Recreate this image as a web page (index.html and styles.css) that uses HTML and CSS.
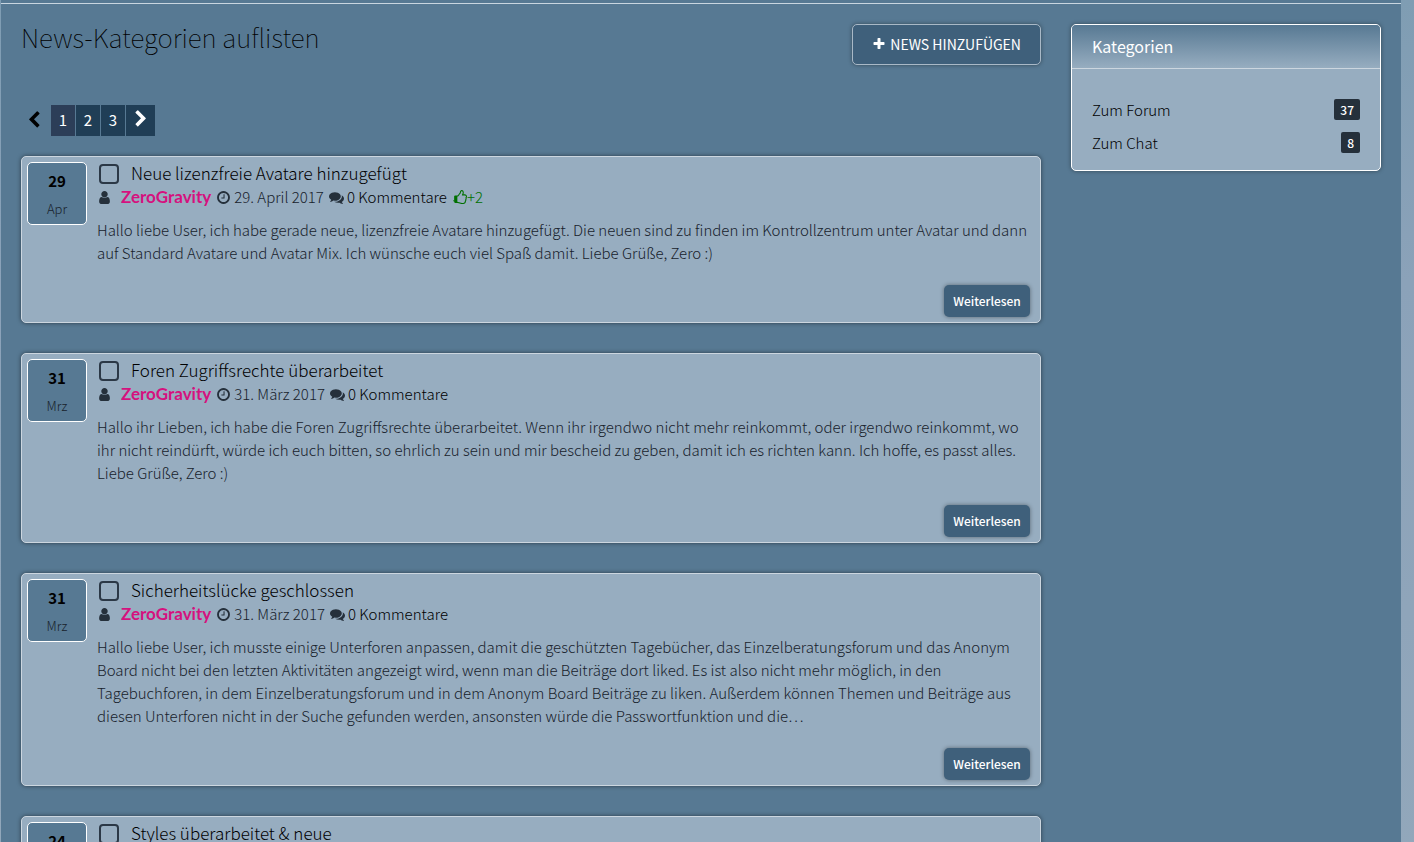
FILE: index.html
```html
<!DOCTYPE html>
<html lang="de">
<head>
  <meta charset="UTF-8">
  <meta name="viewport" content="width=device-width, initial-scale=1">
  <title>News-Kategorien auflisten</title>
  <link rel="stylesheet" href="styles.css">
</head>
<body>

  <!-- icons -->
  <svg class="sprite" aria-hidden="true">
    <symbol id="plus" viewBox="0 0 1792 1792"><path d="M1600 736v192q0 40-28 68t-68 28h-416v416q0 40-28 68t-68 28h-192q-40 0-68-28t-28-68v-416h-416q-40 0-68-28t-28-68v-192q0-40 28-68t68-28h416v-416q0-40 28-68t68-28h192q40 0 68 28t28 68v416h416q40 0 68 28t28 68z"/></symbol>
    <symbol id="user" viewBox="0 0 1792 1792"><path d="M1536 1399q0 109-62.5 187t-150.5 78h-854q-88 0-150.5-78t-62.5-187q0-85 8.5-160.5t31.5-152 58.5-131 94-89 134.5-34.5q131 128 313 128t313-128q76 0 134.5 34.5t94 89 58.5 131 31.5 152 8.5 160.5zm-256-887q0 159-112.5 271.5t-271.5 112.5-271.5-112.5-112.5-271.5 112.5-271.5 271.5-112.5 271.5 112.5 112.5 271.5z"/></symbol>
    <symbol id="clock" viewBox="0 0 1792 1792"><path d="M1024 544v448q0 14-9 23t-23 9h-320q-14 0-23-9t-9-23v-64q0-14 9-23t23-9h224v-352q0-14 9-23t23-9h64q14 0 23 9t9 23zm416 352q0-148-73-273t-198-198-273-73-273 73-198 198-73 273 73 273 198 198 273 73 273-73 198-198 73-273zm224 0q0 209-103 385.5t-279.5 279.5-385.5 103-385.5-103-279.5-279.5-103-385.5 103-385.5 279.5-279.5 385.5-103 385.5 103 279.5 279.5 103 385.5z"/></symbol>
    <symbol id="comments" viewBox="0 0 1792 1792"><path d="M1408 768q0 139-94 257t-256.5 186.5-353.5 68.5q-86 0-176-16-124 88-278 128-36 9-86 16h-3q-11 0-20.5-8t-11.5-21q-1-3-1-6.5t.5-6.5 2-6l2.5-5 3.5-5.5 4-5 4.5-5 4-4.5q5-6 23-25t26-29.5 22.5-29 25-38.5 20.5-44q-124-72-195-177t-71-224q0-139 94-257t256.5-186.5 353.5-68.5 353.5 68.5 256.5 186.5 94 257zm384 256q0 120-71 224.5t-195 176.5q10 24 20.5 44t25 38.5 22.5 29 26 29.5 23 25q1 1 4 4.5t4.5 5 4 5 3.5 5.5l2.5 5 2 6 .5 6.5-1 6.5q-3 14-13 22t-22 7q-50-7-86-16-154-40-278-128-90 16-176 16-271 0-472-132 58 4 88 4 161 0 309-45t264-129q125-92 192-212t67-254q0-77-23-152 129 71 204 178t75 230z"/></symbol>
    <symbol id="thumb" viewBox="0 0 1792 1792"><path d="M256 1408q0-26-19-45t-45-19-45 19-19 45 19 45 45 19 45-19 19-45zm1408-512q0-51-39-89.5t-89-38.5h-352q0-58 48-159.5t48-160.5q0-98-32-145t-128-47q-26 26-38 85t-30.5 125.5-59.5 109.5q-22 23-77 91-4 5-23 30t-31.5 41-34.5 42.5-40 44-38.5 35.5-40 27-35.5 9h-32v640h32q13 0 31.5 3t33 6.5 38 11 35 11.5 35.5 12.5 29 10.5q211 73 342 73h121q192 0 192-167 0-26-5-56 30-16 47.5-52.5t17.5-73.5-18-69q53-50 53-119 0-25-10-55.5t-25-47.5q32-1 53.5-47t21.5-81zm128-1q0 89-49 163 9 33 9 69 0 77-38 144 3 21 3 43 0 101-60 178 1 139-85 219.5t-227 80.5h-129q-96 0-189.5-22.5t-216.5-65.5q-116-40-138-40h-288q-53 0-90.5-37.5t-37.5-90.5v-640q0-53 37.5-90.5t90.5-37.5h274q36-24 137-155 58-75 107-128 24-25 35.5-85.5t30.5-126.5 62-108q39-37 90-37 84 0 151 32.5t102 101.5 35 186q0 93-48 192h176q104 0 180 76t76 179z"/></symbol>
    <symbol id="prev" viewBox="0 0 1792 1792"><path d="M1427 301l-531 531 531 531q19 19 19 45t-19 45l-166 166q-19 19-45 19t-45-19l-742-742q-19-19-19-45t19-45l742-742q19-19 45-19t45 19l166 166q19 19 19 45t-19 45z"/></symbol>
    <symbol id="next" viewBox="0 0 1792 1792"><path d="M1363 877l-742 742q-19 19-45 19t-45-19l-166-166q-19-19-19-45t19-45l531-531-531-531q-19-19-19-45t19-45l166-166q19-19 45-19t45 19l742 742q19 19 19 45t-19 45z"/></symbol>
  </svg>

  <div class="page">
    <main class="content">
      <header class="content-head">
        <h1>News-Kategorien auflisten</h1>
        <button class="btn-add" type="button"><svg class="icon"><use href="#plus"/></svg>NEWS HINZUFÜGEN</button>
      </header>

      <nav class="pages" aria-label="Seiten">
        <span class="prev"><svg class="icon"><use href="#prev"/></svg></span>
        <a class="active" href="#">1</a>
        <a href="#">2</a>
        <a href="#">3</a>
        <a class="next" href="#" aria-label="Weiter"><svg class="icon"><use href="#next"/></svg></a>
      </nav>

      <article class="news">
        <div class="date"><b>29</b><span>Apr</span></div>
        <div class="news-body">
          <div class="title"><input type="checkbox" id="n1"><label for="n1">Neue lizenzfreie Avatare hinzugefügt</label></div>
          <div class="meta">
            <svg class="icon user"><use href="#user"/></svg><a class="author" href="#">ZeroGravity</a>
            <svg class="icon"><use href="#clock"/></svg><span class="time">29. April 2017</span>
            <svg class="icon"><use href="#comments"/></svg><a class="comments" href="#">0 Kommentare</a>
            <span class="likes"><svg class="icon"><use href="#thumb"/></svg>+2</span>
          </div>
          <p>Hallo liebe User, ich habe gerade neue, lizenzfreie Avatare hinzugefügt. Die neuen sind zu finden im Kontrollzentrum unter Avatar und dann auf Standard Avatare und Avatar Mix. Ich wünsche euch viel Spaß damit. Liebe Grüße, Zero :)</p>
          <button class="btn-more" type="button">Weiterlesen</button>
        </div>
      </article>

      <article class="news">
        <div class="date"><b>31</b><span>Mrz</span></div>
        <div class="news-body">
          <div class="title"><input type="checkbox" id="n2"><label for="n2">Foren Zugriffsrechte überarbeitet</label></div>
          <div class="meta">
            <svg class="icon user"><use href="#user"/></svg><a class="author" href="#">ZeroGravity</a>
            <svg class="icon"><use href="#clock"/></svg><span class="time">31. März 2017</span>
            <svg class="icon"><use href="#comments"/></svg><a class="comments" href="#">0 Kommentare</a>
          </div>
          <p>Hallo ihr Lieben, ich habe die Foren Zugriffsrechte überarbeitet. Wenn ihr irgendwo nicht mehr reinkommt, oder irgendwo reinkommt, wo ihr nicht reindürft, würde ich euch bitten, so ehrlich zu sein und mir bescheid zu geben, damit ich es richten kann. Ich hoffe, es passt alles. Liebe Grüße, Zero :)</p>
          <button class="btn-more" type="button">Weiterlesen</button>
        </div>
      </article>

      <article class="news">
        <div class="date"><b>31</b><span>Mrz</span></div>
        <div class="news-body">
          <div class="title"><input type="checkbox" id="n3"><label for="n3">Sicherheitslücke geschlossen</label></div>
          <div class="meta">
            <svg class="icon user"><use href="#user"/></svg><a class="author" href="#">ZeroGravity</a>
            <svg class="icon"><use href="#clock"/></svg><span class="time">31. März 2017</span>
            <svg class="icon"><use href="#comments"/></svg><a class="comments" href="#">0 Kommentare</a>
          </div>
          <p>Hallo liebe User, ich musste einige Unterforen anpassen, damit die geschützten Tagebücher, das Einzelberatungsforum und das Anonym Board nicht bei den letzten Aktivitäten angezeigt wird, wenn man die Beiträge dort liked. Es ist also nicht mehr möglich, in den Tagebuchforen, in dem Einzelberatungsforum und in dem Anonym Board Beiträge zu liken. Außerdem können Themen und Beiträge aus diesen Unterforen nicht in der Suche gefunden werden, ansonsten würde die Passwortfunktion und die…</p>
          <button class="btn-more" type="button">Weiterlesen</button>
        </div>
      </article>

      <article class="news">
        <div class="date"><b>24</b></div>
        <div class="news-body">
          <div class="title"><input type="checkbox" id="n4"><label for="n4">Styles überarbeitet &amp; neue</label></div>
        </div>
      </article>
    </main>

    <aside class="sidebar">
      <section class="box">
        <h2>Kategorien</h2>
        <ul>
          <li><a href="#">Zum Forum</a><span class="badge">37</span></li>
          <li><a href="#">Zum Chat</a><span class="badge">8</span></li>
        </ul>
      </section>
    </aside>
  </div>

</body>
</html>
```
FILE: styles.css
```css
* {
  box-sizing: border-box;
}

body {
  margin: 0;
  padding: 3px 13px 0 1px;
  background: linear-gradient(#7f9db3, #8ba2b9 30%, #93a8bb);
  color: #17222c;
  font-family: "Noto Sans CJK JP", "Source Sans Pro", sans-serif;
  font-size: 15px;
  font-weight: 300;
  line-height: 23px;
}

a {
  color: #000;
  text-decoration: none;
}

button {
  font-family: inherit;
  color: #fff;
  background: #3f607b;
  cursor: pointer;
}

.sprite {
  display: none;
}

.icon {
  width: 14px;
  height: 14px;
  flex: none;
  fill: currentColor;
}

.page {
  display: flex;
  align-items: flex-start;
  gap: 30px;
  padding: 20px;
  background: #577993;
  border-top: 1px solid #c9d6e0;
  box-shadow: 0 -3px #577993;
}

.content {
  flex: 1;
  min-width: 0;
}

.content-head {
  display: flex;
  justify-content: space-between;
  align-items: flex-start;
  margin-bottom: 40px;
}

h1 {
  margin: 0;
  color: #000;
  font-size: 26px;
  font-weight: 100;
  line-height: 26px;
}

.btn-add {
  display: flex;
  align-items: center;
  gap: 4px;
  height: 41px;
  padding: 0 19px 2px;
  border: 1px solid #a9b9c7;
  border-radius: 5px;
  box-shadow: 0 0 4px rgba(0,0,0,0.4);
  font-size: 14px;
}

.pages {
  display: flex;
  gap: 1px;
  margin-bottom: 20px;
}

.pages a,
.pages .prev {
  display: flex;
  align-items: center;
  justify-content: center;
  width: 24px;
  height: 31px;
  padding-bottom: 2px;
  color: #fff;
  background: #203e56;
  font-weight: 400;
}

.pages .prev {
  width: 29px;
  padding-right: 4px;
  color: #000;
  background: none;
}

.pages .active {
  background: #2c3e58;
}

.pages .next {
  width: 29px;
  padding-bottom: 4px;
}

.pages .icon {
  width: 18px;
  height: 18px;
}

.news {
  display: flex;
  gap: 10px;
  margin-bottom: 30px;
  padding: 5px 10px 5px 5px;
  background: #97adc0;
  border: 1px solid #ccd6df;
  border-radius: 5px;
  box-shadow: 0 0 4px rgba(0,0,0,0.5);
}

.date {
  display: flex;
  flex-direction: column;
  align-items: center;
  gap: 5px;
  width: 60px;
  height: 63px;
  padding-top: 6px;
  background: #577993;
  border: 1px solid #fff;
  border-radius: 5px;
}

.date b {
  color: #000;
  font-weight: 700;
}

.date span {
  font-size: 13px;
}

.news-body {
  display: flex;
  flex-direction: column;
  flex: 1;
  min-width: 0;
}

.title {
  display: flex;
  align-items: center;
  gap: 12px;
  height: 24px;
  padding-left: 2px;
  color: #000;
  font-size: 17px;
}

.title input {
  appearance: none;
  width: 20px;
  height: 20px;
  margin: 0;
  border: 2px solid #2b3846;
  border-radius: 4px;
}

.title label {
  padding-bottom: 3px;
}

.meta {
  display: flex;
  align-items: center;
  gap: 3px;
  height: 22px;
  margin-bottom: 10px;
}

.meta .icon {
  width: 15px;
  height: 15px;
  color: #25303b;
}

.meta .user {
  margin-right: 6px;
}

.author {
  margin-right: 2px;
  color: #d5117e;
  font-family: "Trebuchet MS", Lato, sans-serif;
  font-size: 17px;
  font-weight: bold;
  line-height: 20px;
}

.time,
.comments,
.likes {
  margin-right: 2px;
  padding-bottom: 2px;
}

.likes {
  display: flex;
  align-items: center;
  color: #007000;
}

.likes .icon {
  color: inherit;
}

.news p {
  margin: 0 0 21px;
}

.btn-more {
  align-self: flex-end;
  width: 86px;
  height: 32px;
  padding: 0 0 2px;
  border: none;
  border-radius: 5px;
  box-shadow: 0 0 4px rgba(0,0,0,0.4);
  font-size: 12px;
  font-weight: 500;
}

.sidebar {
  width: 310px;
}

.box {
  background: #97adc0;
  border: 1px solid #fff;
  border-radius: 5px;
  box-shadow: 0 0 4px rgba(0,0,0,0.4);
  overflow: hidden;
}

.box h2 {
  margin: 0;
  padding: 10px 20px;
  color: #fff;
  background: linear-gradient(#577993, #97adc0);
  border-bottom: 1px solid #ccd6df;
  font-size: 16px;
  font-weight: 400;
}

.box ul {
  margin: 0;
  padding: 24px 20px 11px;
  list-style: none;
}

.box li {
  display: flex;
  justify-content: space-between;
  align-items: center;
  height: 33px;
}

.badge {
  padding: 0 6px;
  color: #fff;
  background: #25303b;
  border-radius: 2px;
  font-size: 12px;
  font-weight: 500;
  line-height: 21px;
}
```
